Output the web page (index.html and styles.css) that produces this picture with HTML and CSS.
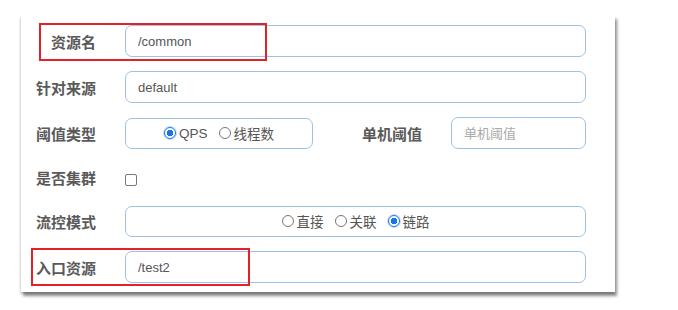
FILE: index.html
```html
<!DOCTYPE html>
<html lang="zh-CN">
<head>
  <meta charset="UTF-8" />
  <meta name="viewport" content="width=device-width, initial-scale=1.0"/>
  <title>新增流控规则</title>
  <link rel="stylesheet" href="styles.css">
</head>
<body>

  <!-- Flow rule form -->
  <div class="rule-card">
    <form class="rule-form">
      <div class="form-row">
        <label class="row-label">资源名</label>
        <input class="text-input" type="text" value="/common" />
      </div>
      <div class="form-row">
        <label class="row-label">针对来源</label>
        <input class="text-input" type="text" value="default" />
      </div>
      <div class="form-row">
        <label class="row-label">阈值类型</label>
        <div class="radio-box short">
          <label class="radio"><input type="radio" name="grade" checked /><span>QPS</span></label>
          <label class="radio"><input type="radio" name="grade" /><span>线程数</span></label>
        </div>
        <label class="row-label side">单机阈值</label>
        <input class="text-input small" type="text" placeholder="单机阈值" />
      </div>
      <div class="form-row check-row">
        <label class="row-label">是否集群</label>
        <input class="check" type="checkbox" />
      </div>
      <div class="form-row">
        <label class="row-label">流控模式</label>
        <div class="radio-box">
          <label class="radio"><input type="radio" name="mode" /><span>直接</span></label>
          <label class="radio"><input type="radio" name="mode" /><span>关联</span></label>
          <label class="radio"><input type="radio" name="mode" checked /><span>链路</span></label>
        </div>
      </div>
      <div class="form-row">
        <label class="row-label">入口资源</label>
        <input class="text-input" type="text" value="/test2" />
      </div>
    </form>

    <!-- annotation boxes -->
    <div class="mark mark-top"></div>
    <div class="mark mark-bottom"></div>
  </div>

</body>
</html>
```

FILE: styles.css
```css
html,
body {
  height: 100%;
}

body {
  margin: 0;
  padding-top: 15px;
  box-sizing: border-box;
  background-color: #fff;
  font-family: "Liberation Sans", "Noto Sans CJK SC", sans-serif;
  color: #555;
}

/* Card */
.rule-card {
  position: relative;
  width: 594px;
  margin-left: 21px;
  padding: 10px 29px 9px 15px;
  box-sizing: border-box;
  background-color: #fff;
  box-shadow: 2px 4px 3px rgba(0, 0, 0, 0.45), -1px 2px 2px rgba(0, 0, 0, 0.15);
}

.rule-form {
  margin: 0;
}

.form-row {
  display: flex;
  align-items: center;
  height: 32px;
  margin-bottom: 14px;
}

.form-row:last-child {
  margin-bottom: 0;
}

.check-row {
  height: 28px;
}

.row-label {
  width: 60px;
  margin-right: 29px;
  flex-shrink: 0;
  text-align: right;
  font-family: "Noto Sans CJK SC", sans-serif;
  font-size: 15px;
  font-weight: bold;
  color: #595959;
}

.row-label.side {
  width: auto;
  flex: 1;
}

/* Inputs */
.text-input {
  flex: 1;
  height: 32px;
  padding: 0 12px;
  box-sizing: border-box;
  border: 1px solid #9cc2e5;
  border-radius: 7px;
  font-family: "Liberation Sans", "Noto Sans CJK SC", sans-serif;
  font-size: 13px;
  color: #555;
  outline: none;
}

.text-input.small {
  flex: none;
  width: 135px;
}

.text-input::placeholder {
  font-family: "Noto Sans CJK SC", sans-serif;
  color: #aaa;
}

.radio-box {
  flex: 1;
  height: 31px;
  display: flex;
  align-items: center;
  justify-content: center;
  gap: 11px;
  box-sizing: border-box;
  border: 1px solid #9cc2e5;
  border-radius: 7px;
}

.radio-box.short {
  flex: none;
  width: 188px;
}

.radio {
  display: flex;
  align-items: center;
  gap: 3px;
  font-family: "Liberation Sans", "Noto Sans CJK SC", sans-serif;
  font-size: 13.5px;
  color: #555;
}

.radio input {
  appearance: none;
  width: 12px;
  height: 12px;
  margin: 0;
  border: 1px solid #777;
  border-radius: 50%;
  box-sizing: border-box;
}

.radio input:checked {
  border: 1px solid #1a73e8;
  background: radial-gradient(circle, #1a73e8 0 3px, #fff 3.5px);
  box-shadow: 0 0 0 1px rgba(26, 115, 232, 0.25);
}

.check {
  appearance: none;
  width: 12px;
  height: 12px;
  margin: 6px 0 0 0;
  border: 1px solid #777;
  border-radius: 2px;
  box-sizing: border-box;
}

/* Red annotation frames */
.mark {
  position: absolute;
  border: 2px solid #e3212b;
  box-sizing: border-box;
}

.mark-top {
  left: 18px;
  top: 8px;
  width: 228px;
  height: 38px;
}

.mark-bottom {
  left: 10px;
  top: 233px;
  width: 219px;
  height: 38px;
}
```
